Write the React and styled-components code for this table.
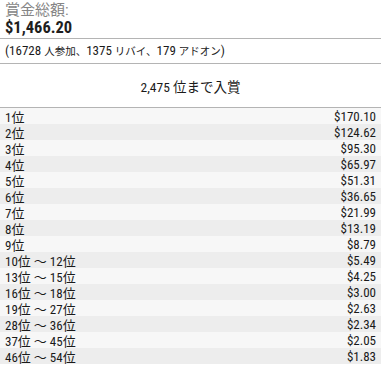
import React from "react";
import styled, { createGlobalStyle } from "styled-components";

const Global = createGlobalStyle`
  html, body { margin: 0; padding: 0; background: #fff; }
  body { font-family: "Roboto Condensed", "Noto Sans CJK JP", sans-serif; color: #1a1a1a; }
`;

const Panel = styled.div`
  width: 381px;
  display: flex;
  flex-direction: column;
`;

const Head = styled.div`
  height: 39px;
  box-sizing: border-box;
  padding: 1px 5px 0;
  border-bottom: 1px solid #b4b4b4;
`;

const Label = styled.div`
  font-size: 15px;
  line-height: 18px;
  color: #858585;
`;

const Amount = styled.div`
  font-size: 16.5px;
  font-weight: bold;
  line-height: 18px;
  color: #1e1e1e;
`;

const Entrants = styled.div`
  height: 25px;
  box-sizing: border-box;
  padding: 0 5px;
  font-size: 13px;
  line-height: 24px;
  border-bottom: 1px solid #b4b4b4;
`;

const Kana = styled.span`
  font-size: 10.5px;
`;

const Paid = styled.div`
  height: 44px;
  box-sizing: border-box;
  display: flex;
  align-items: center;
  justify-content: center;
  font-size: 13.5px;
  padding-top: 1px;
  border-bottom: 1px solid #b4b4b4;
`;

const Table = styled.div`
  display: flex;
  flex-direction: column;
`;

const Row = styled.div`
  height: 16px;
  display: flex;
  justify-content: space-between;
  align-items: center;
  padding: 0 5px;
  font-size: 13px;
  background: ${(p) => (p.$alt ? "#ededed" : "#f7f7f7")};
`;

const rows = [
  ["1位", "$170.10"],
  ["2位", "$124.62"],
  ["3位", "$95.30"],
  ["4位", "$65.97"],
  ["5位", "$51.31"],
  ["6位", "$36.65"],
  ["7位", "$21.99"],
  ["8位", "$13.19"],
  ["9位", "$8.79"],
  ["10位 ～ 12位", "$5.49"],
  ["13位 ～ 15位", "$4.25"],
  ["16位 ～ 18位", "$3.00"],
  ["19位 ～ 27位", "$2.63"],
  ["28位 ～ 36位", "$2.34"],
  ["37位 ～ 45位", "$2.05"],
  ["46位 ～ 54位", "$1.83"],
];

export default function App() {
  return (
    <Panel>
      <Global />
      <Head>
        <Label>賞金総額:</Label>
        <Amount>$1,466.20</Amount>
      </Head>
      <Entrants>
        (16728 <Kana>人参加、</Kana>1375 <Kana>リバイ、</Kana>179 <Kana>アドオン</Kana>)
      </Entrants>
      <Paid>2,475 位まで入賞</Paid>
      <Table>
        {rows.map(([place, prize], i) => (
          <Row key={place} $alt={i % 2 === 1}>
            <span>{place}</span>
            <span>{prize}</span>
          </Row>
        ))}
      </Table>
    </Panel>
  );
}
